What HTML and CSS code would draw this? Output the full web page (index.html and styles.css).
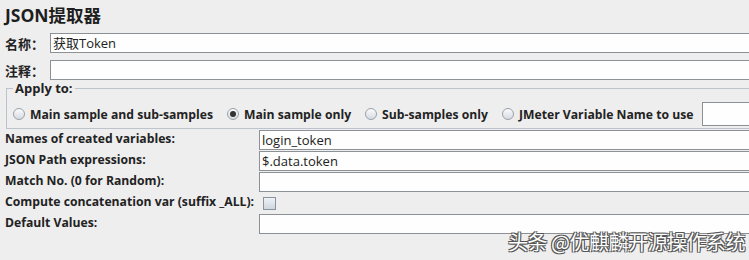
FILE: index.html
```html
<!DOCTYPE html>
<html lang="zh-CN">
<head>
  <meta charset="UTF-8">
  <title>JSON提取器</title>
  <link rel="stylesheet" href="styles.css">
</head>
<body>
  <div class="panel">
    <h1 class="title">JSON提取器</h1>

    <div class="name-row">
      <label class="name-label">名称：</label>
      <div class="field">获取Token</div>
    </div>
    <div class="name-row">
      <label class="name-label">注释：</label>
      <div class="field"></div>
    </div>

    <fieldset class="apply">
      <legend>Apply to:</legend>
      <div class="radios">
        <span class="radio"><span class="dot"></span>Main sample and sub-samples</span>
        <span class="radio checked"><span class="dot"></span>Main sample only</span>
        <span class="radio"><span class="dot"></span>Sub-samples only</span>
        <span class="radio"><span class="dot"></span>JMeter Variable Name to use</span>
        <div class="field var-field"></div>
      </div>
    </fieldset>

    <div class="props">
      <label>Names of created variables:</label>
      <div class="field">login_token</div>

      <label>JSON Path expressions:</label>
      <div class="field">$.data.token</div>

      <label>Match No. (0 for Random):</label>
      <div class="field"></div>

      <label>Compute concatenation var (suffix _ALL):</label>
      <div class="check-cell"><span class="checkbox"></span></div>

      <label>Default Values:</label>
      <div class="field"></div>
    </div>

    <div class="watermark">头条 @优麒麟开源操作系统</div>
  </div>
</body>
</html>
```

FILE: styles.css
```css
/* Base */
* {
  margin: 0;
  padding: 0;
  box-sizing: border-box;
}

body {
  background: #eeeeee;
  font-family: 'Open Sans', 'Noto Sans CJK SC', sans-serif;
  font-size: 12.2px;
  color: #222;
  overflow: hidden;
  width: 749px;
  height: 260px;
}

.panel {
  position: relative;
  height: 260px;
}

.title {
  font-size: 17.5px;
  font-weight: 700;
  line-height: 24px;
  padding: 3px 0 0 5px;
  height: 33px;
  color: #1e1e1e;
}

/* Text fields */
.field {
  height: 20px;
  background: #fdfefd;
  border: 1px solid #8c9196;
  border-right: none;
  padding: 0 2px;
  line-height: 18px;
  font-weight: 400;
  white-space: nowrap;
  overflow: hidden;
}

.name-row {
  display: flex;
  align-items: center;
  padding-left: 5px;
  margin-bottom: 7px;
}

.name-label {
  width: 45px;
  font-size: 13px;
  font-weight: 700;
}

.name-row .field {
  flex: 1;
  font-size: 13px;
}

/* Apply to box */
.apply {
  border: 1px solid #bcc3cc;
  border-right: none;
  margin: -7px 0 0 6px;
  padding: 0 0 3px 6px;
  height: 49px;
}

.apply legend {
  font-size: 13px;
  font-weight: 700;
  padding: 0 2px;
  line-height: 17px;
}

.radios {
  display: flex;
  align-items: center;
  margin-top: 5px;
  font-weight: 700;
  white-space: nowrap;
}

.radio {
  display: flex;
  align-items: center;
  margin-right: 14px;
}

.dot {
  width: 12px;
  height: 12px;
  border-radius: 50%;
  border: 1px solid #9aa0a8;
  background: linear-gradient(#fafbfc, #d6dbe1);
  margin-right: 5px;
  position: relative;
}

.radio.checked .dot::after {
  content: '';
  position: absolute;
  left: 2px;
  top: 2px;
  width: 6px;
  height: 6px;
  border-radius: 50%;
  background: #333;
}

.var-field {
  flex: 1;
  height: 24px;
  margin-left: -5px;
}

/* Property rows */
.props {
  display: grid;
  grid-template-columns: 254px 1fr;
  grid-auto-rows: 20px;
  row-gap: 1px;
  padding-left: 5px;
  margin-top: 1px;
  font-weight: 700;
}

.props label {
  line-height: 18px;
  white-space: nowrap;
}

.props .field {
  font-size: 13px;
}

.check-cell {
  display: flex;
  align-items: center;
}

.checkbox {
  width: 13px;
  height: 13px;
  margin-left: 4px;
  border: 1px solid #8d939b;
  background: linear-gradient(#eef2f6, #cdd5de);
}

/* Watermark laid over the bottom right corner */
.watermark {
  position: absolute;
  left: 508px;
  top: 230px;
  font-family: 'Noto Sans CJK SC', sans-serif;
  font-size: 20px;
  line-height: 24px;
  color: #ffffff;
  text-shadow: 1px 1px 0 #555, -1px -1px 0 #555, 1px -1px 0 #555, -1px 1px 0 #555;
  letter-spacing: -0.5px;
}
```
